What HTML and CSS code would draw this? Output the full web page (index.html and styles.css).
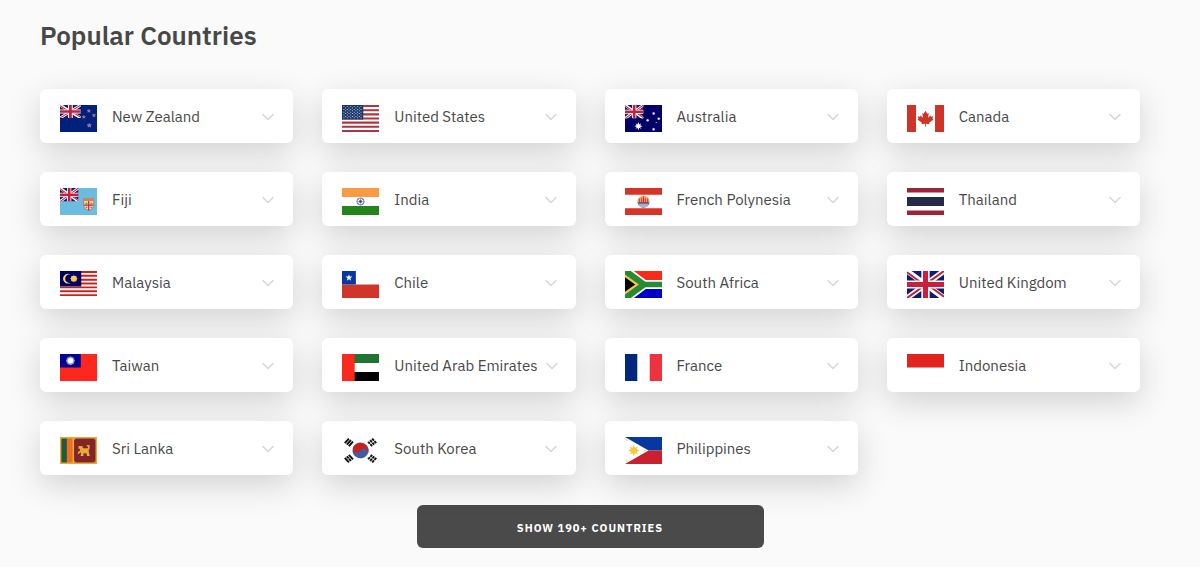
FILE: index.html
```html
<!DOCTYPE html>
<html lang="en">
<head>
<meta charset="utf-8">
<meta name="viewport" content="width=device-width, initial-scale=1">
<title>Popular Countries</title>
<link rel="stylesheet" href="styles.css">
</head>
<body>
<svg class="sprite" aria-hidden="true">
  <symbol id="chevron" viewBox="0 0 12 24"><path d="M1 9.500l5 5 5-5" fill="none" stroke="currentColor" stroke-width="1.600" stroke-linecap="round" stroke-linejoin="round"/></symbol>
  <symbol id="union" viewBox="0 0 40 30" preserveAspectRatio="none">
    <path fill="#0b1f6b" d="M0 0h40v30H0z"/>
    <path stroke="#fff" stroke-width="6" d="M0 0l40 30M40 0L0 30"/>
    <path stroke="#c8203c" stroke-width="2.200" d="M0 1.300L18 15M22 15l18 13.700M40 0L21 14M19 16L0 30"/>
    <path stroke="#fff" stroke-width="9" d="M20 0v30M0 15h40"/>
    <path stroke="#c8203c" stroke-width="5.500" d="M20 0v30M0 15h40"/>
  </symbol>
  <symbol id="star" viewBox="-10 -10 20 20"><path d="M0-10L2.300-3.200H9.500L3.700 1.200 5.900 8.100 0 3.900-5.900 8.100-3.700 1.200-9.500-3.200H-2.300z"/></symbol>
  <symbol id="sun" viewBox="-10 -10 20 20"><path d="M0-10L2-4.200 7.100-7.100 4.200-2 10 0 4.200 2 7.100 7.100 2 4.200 0 10-2 4.200-7.100 7.100-4.200 2-10 0-4.200-2-7.100-7.100-2-4.200z"/></symbol>
</svg>

<main class="page">
  <h1 class="title">Popular Countries</h1>
  <ul class="countries">
    <li><button class="country" type="button" aria-expanded="false">
      <svg class="flag" viewBox="0 0 40 30" preserveAspectRatio="none" aria-hidden="true"><path fill="#00207c" d="M0 0h40v30H0z"/><use href="#union" width="22.500" height="14.500"/><g fill="#dc4661" stroke="#b9bddd" stroke-width="2"><use href="#star" x="29.200" y="4.600" width="4" height="4"/><use href="#star" x="23.800" y="11.300" width="4" height="4"/><use href="#star" x="34.700" y="9.500" width="4" height="4"/><use href="#star" x="29.200" y="20.200" width="5" height="5"/></g></svg>
      <span class="name">New Zealand</span><svg class="chevron" aria-hidden="true"><use href="#chevron"/></svg></button></li>
    <li><button class="country" type="button" aria-expanded="false">
      <svg class="flag" viewBox="0 0 40 30" preserveAspectRatio="none" aria-hidden="true"><path fill="#fff" d="M0 0h40v30H0z"/><path stroke="#ad3643" stroke-width="2.300" d="M0 1.150h40M0 5.770h40M0 10.380h40M0 15h40M0 19.620h40M0 24.230h40M0 28.850h40"/><path fill="#1b3667" d="M0 0h23v16.150H0z"/><g stroke="#b9c6df" stroke-width="1.100" stroke-dasharray="1.100 2.600"><path d="M1.500 1.800h20.500M1.500 4.900h20.500M1.500 8h20.500M1.500 11.100h20.500M1.500 14.200h20.500"/><path d="M3.350 3.350h18M3.350 6.450h18M3.350 9.550h18M3.350 12.650h18"/></g></svg>
      <span class="name">United States</span><svg class="chevron" aria-hidden="true"><use href="#chevron"/></svg></button></li>
    <li><button class="country" type="button" aria-expanded="false">
      <svg class="flag" viewBox="0 0 40 30" preserveAspectRatio="none" aria-hidden="true"><path fill="#000066" d="M0 0h40v30H0z"/><use href="#union" width="20" height="15"/><g fill="#fff"><use href="#sun" x="10" y="19" width="9" height="9"/><use href="#sun" x="29" y="7.500" width="4" height="4"/><use href="#sun" x="22.500" y="15" width="4" height="4"/><use href="#sun" x="34.500" y="13.200" width="4" height="4"/><use href="#sun" x="29" y="25" width="4" height="4"/><use href="#star" x="32.700" y="18.500" width="2" height="2"/></g></svg>
      <span class="name">Australia</span><svg class="chevron" aria-hidden="true"><use href="#chevron"/></svg></button></li>
    <li><button class="country" type="button" aria-expanded="false">
      <svg class="flag" viewBox="0 0 40 30" preserveAspectRatio="none" aria-hidden="true"><path fill="#fff" d="M0 0h40v30H0z"/><path fill="#d03428" d="M0 0h9.700v30H0zM30.300 0H40v30h-9.700zM20 6.500l1.900 3.300 1.600-.8-.8 5.200 2.600-2.600.6 1.400 2.500-.4-.9 2.700 1.100.8-4.700 3.600.5 1.800-4-.6.100 3h-1l.1-3-4 .6.500-1.800-4.700-3.600 1.100-.8-.9-2.700 2.500.4.600-1.400 2.600 2.600-.8-5.200 1.600.8z"/></svg>
      <span class="name">Canada</span><svg class="chevron" aria-hidden="true"><use href="#chevron"/></svg></button></li>

    <li><button class="country" type="button" aria-expanded="false">
      <svg class="flag" viewBox="0 0 40 30" preserveAspectRatio="none" aria-hidden="true"><path fill="#6cbcdf" d="M0 0h40v30H0z"/><use href="#union" width="20" height="15"/><path fill="#f0d5b0" stroke="#97694f" stroke-width=".700" d="M25.500 12h11v7c0 3.500-3 5-5.500 6-2.500-1-5.500-2.500-5.500-6z"/><path fill="#d88348" d="M25.500 11.500h11v3h-11z"/><path stroke="#c62535" stroke-width="1.300" d="M31 14.500V25M26 19h10"/><path stroke="#718258" stroke-width="1.300" d="M27.500 17h2M33 17h2M27.800 21.500h1.700M33 21.500h1.700"/></svg>
      <span class="name">Fiji</span><svg class="chevron" aria-hidden="true"><use href="#chevron"/></svg></button></li>
    <li><button class="country" type="button" aria-expanded="false">
      <svg class="flag" viewBox="0 0 40 30" preserveAspectRatio="none" aria-hidden="true"><path fill="#fff" d="M0 0h40v30H0z"/><path fill="#fa9b43" d="M0 0h40v10H0z"/><path fill="#26841d" d="M0 20h40v10H0z"/><g fill="none" stroke="#5555a5"><circle cx="20" cy="15" r="3.900" stroke-width=".900"/><path stroke-width=".500" d="M20 11v8M16 15h8M17.200 12.200l5.600 5.600M22.800 12.200l-5.600 5.600"/></g><circle cx="20" cy="15" r="1.300" fill="#393989"/></svg>
      <span class="name">India</span><svg class="chevron" aria-hidden="true"><use href="#chevron"/></svg></button></li>
    <li><button class="country" type="button" aria-expanded="false">
      <svg class="flag" viewBox="0 0 40 30" preserveAspectRatio="none" aria-hidden="true"><path fill="#fff" d="M0 0h40v30H0z"/><path fill="#d63426" d="M0 0h40v7.500H0zM0 22.500h40V30H0z"/><circle cx="20" cy="15" r="6.500" fill="#efa467"/><path fill="#5d7fb9" d="M13.500 15.500h13a6.500 6.500 0 0 1-13 0z"/><path stroke="#fff" stroke-width=".700" d="M15 18.800h10M16 20.200h8"/><path fill="none" stroke="#b63e35" stroke-width="1.100" d="M15.500 12v4.500h9V12M18 11.500v5M20 9.500v7M22 11.500v5"/></svg>
      <span class="name">French Polynesia</span><svg class="chevron" aria-hidden="true"><use href="#chevron"/></svg></button></li>
    <li><button class="country" type="button" aria-expanded="false">
      <svg class="flag" viewBox="0 0 40 30" preserveAspectRatio="none" aria-hidden="true"><path fill="#9c2439" d="M0 0h40v30H0z"/><path fill="#fff" d="M0 5h40v20H0z"/><path fill="#282849" d="M0 10h40v10H0z"/></svg>
      <span class="name">Thailand</span><svg class="chevron" aria-hidden="true"><use href="#chevron"/></svg></button></li>

    <li><button class="country" type="button" aria-expanded="false">
      <svg class="flag" viewBox="0 0 40 30" preserveAspectRatio="none" aria-hidden="true"><path fill="#fff" d="M0 0h40v30H0z"/><path stroke="#c5241c" stroke-width="2.140" d="M0 1.070h40M0 5.360h40M0 9.640h40M0 13.930h40M0 18.210h40M0 22.500h40M0 26.790h40"/><path fill="#000063" d="M0 0h23v17.140H0z"/><path fill="#ffd45a" d="M11.500 3.700a5.500 5.500 0 1 0 0 9.600 4.900 4.900 0 1 1 0-9.600z"/><use href="#sun" x="10.500" y="4" width="9" height="9" fill="#ffc94d"/><circle cx="15" cy="8.500" r="3.200" fill="#ffc94d"/></svg>
      <span class="name">Malaysia</span><svg class="chevron" aria-hidden="true"><use href="#chevron"/></svg></button></li>
    <li><button class="country" type="button" aria-expanded="false">
      <svg class="flag" viewBox="0 0 40 30" preserveAspectRatio="none" aria-hidden="true"><path fill="#fff" d="M0 0h40v15H0z"/><path fill="#d13529" d="M0 15h40v15H0z"/><path fill="#0638a0" d="M0 0h15v15H0z"/><use href="#star" x="3.500" y="3.500" width="8" height="8" fill="#fff"/></svg>
      <span class="name">Chile</span><svg class="chevron" aria-hidden="true"><use href="#chevron"/></svg></button></li>
    <li><button class="country" type="button" aria-expanded="false">
      <svg class="flag" viewBox="0 0 40 30" preserveAspectRatio="none" aria-hidden="true"><path fill="#fff" d="M0 0h40v30H0z"/><path fill="#fb281c" d="M9.500 0H40v10H22.500z"/><path fill="#0000c8" d="M9.500 30H40V20H22.500z"/><path fill="#278b36" d="M0 0h6.300L22 12h18v6H22L6.300 30H0z"/><path fill="#f6c64a" d="M0 3.800L15 15 0 26.200z"/><path fill="#000" d="M0 7l11 8L0 23z"/></svg>
      <span class="name">South Africa</span><svg class="chevron" aria-hidden="true"><use href="#chevron"/></svg></button></li>
    <li><button class="country" type="button" aria-expanded="false">
      <svg class="flag" viewBox="0 0 40 30" preserveAspectRatio="none" aria-hidden="true"><use href="#union" width="40" height="30"/></svg>
      <span class="name">United Kingdom</span><svg class="chevron" aria-hidden="true"><use href="#chevron"/></svg></button></li>

    <li><button class="country" type="button" aria-expanded="false">
      <svg class="flag" viewBox="0 0 40 30" preserveAspectRatio="none" aria-hidden="true"><path fill="#fc281d" d="M0 0h40v30H0z"/><path fill="#000095" d="M0 0h22.500v15H0z"/><circle cx="11.300" cy="7.500" r="4.600" fill="#7f86d3"/><use href="#sun" x="6" y="2.200" width="10.600" height="10.600" fill="#9da2df"/><circle cx="11.300" cy="7.500" r="3" fill="#fff"/></svg>
      <span class="name">Taiwan</span><svg class="chevron" aria-hidden="true"><use href="#chevron"/></svg></button></li>
    <li><button class="country" type="button" aria-expanded="false">
      <svg class="flag" viewBox="0 0 40 30" preserveAspectRatio="none" aria-hidden="true"><path fill="#fff" d="M0 0h40v30H0z"/><path fill="#207331" d="M0 0h40v10H0z"/><path d="M0 20h40v10H0z"/><path fill="#fb281c" d="M0 0h13.700v30H0z"/></svg>
      <span class="name">United Arab Emirates</span><svg class="chevron" aria-hidden="true"><use href="#chevron"/></svg></button></li>
    <li><button class="country" type="button" aria-expanded="false">
      <svg class="flag" viewBox="0 0 40 30" preserveAspectRatio="none" aria-hidden="true"><path fill="#fff" d="M0 0h40v30H0z"/><path fill="#00267d" d="M0 0h13.300v30H0z"/><path fill="#ed3340" d="M26.700 0H40v30H26.700z"/></svg>
      <span class="name">France</span><svg class="chevron" aria-hidden="true"><use href="#chevron"/></svg></button></li>
    <li><button class="country" type="button" aria-expanded="false">
      <svg class="flag" viewBox="0 0 40 30" preserveAspectRatio="none" aria-hidden="true"><path fill="#fff" d="M0 0h40v30H0z"/><path fill="#e2231f" d="M0 0h40v15H0z"/></svg>
      <span class="name">Indonesia</span><svg class="chevron" aria-hidden="true"><use href="#chevron"/></svg></button></li>

    <li><button class="country" type="button" aria-expanded="false">
      <svg class="flag" viewBox="0 0 40 30" preserveAspectRatio="none" aria-hidden="true"><path fill="#e6ac35" d="M0 0h40v30H0z"/><path fill="#1e5a3e" d="M1.500 1.700h6v26.600h-6z"/><path fill="#f26d24" d="M7.500 1.700h6v26.600h-6z"/><path fill="#842429" d="M15.200 1.700h23.200v26.600H15.200z"/><path fill="#e6ac35" d="M15.200 1.700h2l-2 2zM38.400 1.700h-2l2 2zM15.200 28.300h2l-2-2zM38.400 28.300h-2l2-2zM20 10h4l1 2.500h5.500l-.3-2h-1.200V9h3v4l-1 1.500.3 3 1 3.500h-3l-.8-3h-3l-.3 3h-3l.8-3.500-1.500-.3-1 1.800h-1.500l1-3.300 1.800-.5-.5-2.200H20z"/></svg>
      <span class="name">Sri Lanka</span><svg class="chevron" aria-hidden="true"><use href="#chevron"/></svg></button></li>
    <li><button class="country" type="button" aria-expanded="false">
      <svg class="flag" viewBox="0 0 40 30" preserveAspectRatio="none" aria-hidden="true"><path fill="#fff" d="M0 0h40v30H0z"/><g transform="rotate(33 20 15)"><circle cx="20" cy="15" r="8.700" fill="#415b9f"/><path fill="#c7231d" d="M11.300 15a8.700 8.700 0 0 1 17.400 0 4.350 4.350 0 0 0-8.700 0 4.350 4.350 0 0 1-8.700 0z"/></g><g stroke="#111" stroke-width="2.100"><path d="M3 6.800l4.500-5M5.200 8.500l4.500-5M7.400 10.200l4.500-5"/><path d="M37 6.800l-4.500-5M34.800 8.500l-4.500-5M32.600 10.200l-4.500-5" stroke-dasharray="2.900 .800"/><path d="M3 23.200l4.500 5M5.200 21.500l4.500 5M7.400 19.800l4.500 5"/><path d="M37 23.200l-4.500 5M34.800 21.500l-4.500 5M32.600 19.800l-4.500 5" stroke-dasharray="2.900 .800"/></g><path stroke="#fff" stroke-width=".900" d="M6.700 24.600l1.500-1.200"/></svg>
      <span class="name">South Korea</span><svg class="chevron" aria-hidden="true"><use href="#chevron"/></svg></button></li>
    <li><button class="country" type="button" aria-expanded="false">
      <svg class="flag" viewBox="0 0 40 30" preserveAspectRatio="none" aria-hidden="true"><path fill="#0638a0" d="M0 0h40v15H0z"/><path fill="#ca202f" d="M0 15h40v15H0z"/><path fill="#fff" d="M0 0l25.500 15L0 30z"/><g fill="#f5c83e"><use href="#sun" x="3" y="8.500" width="13" height="13"/><circle cx="9.500" cy="15" r="3.400"/><use href="#star" x=".500" y="2" width="3" height="3"/><use href="#star" x=".500" y="25" width="3" height="3"/><use href="#star" x="20" y="13.500" width="3" height="3"/></g></svg>
      <span class="name">Philippines</span><svg class="chevron" aria-hidden="true"><use href="#chevron"/></svg></button></li>
  </ul>
  <button class="show-all" type="button">SHOW 190+ COUNTRIES</button>
</main>
</body>
</html>
```
FILE: styles.css
```css
* {
  box-sizing: border-box;
}

body {
  margin: 0;
  background: #fafafa;
  color: #484848;
  font-family: "IBM Plex Sans", Roboto, "Noto Sans", sans-serif;
}

.sprite {
  display: none;
}

.page {
  padding: 17px 60px 19px 40px;
}

.title {
  margin: 0 0 36px;
  font-size: 26px;
  line-height: 36px;
  font-weight: 600;
}

.countries {
  display: grid;
  grid-template-columns: repeat(auto-fill, minmax(240px, 1fr));
  gap: 29px;
  margin: 0 0 30px;
  padding: 0;
  list-style: none;
}

.country {
  display: flex;
  align-items: flex-start;
  width: 100%;
  padding: 16px 19px 11px 20px;
  border: 0;
  border-radius: 6px;
  background: #fff;
  box-shadow: 0 10px 32px rgba(0, 0, 0, 0.16);
  color: inherit;
  font: inherit;
  font-size: 15px;
  line-height: 24px;
  text-align: left;
  cursor: pointer;
}

.flag {
  flex: none;
  width: 37px;
  height: 27px;
  margin-right: 15px;
}

.name {
  flex: 1 0 auto;
  white-space: nowrap;
}

.chevron {
  flex: none;
  width: 12px;
  height: 24px;
  margin-left: 9px;
  color: #d8d8d8;
}

.show-all {
  display: block;
  width: 347px;
  max-width: 100%;
  margin: 0 auto;
  padding: 13px 20px 10px;
  border: 0;
  border-radius: 6px;
  background: #4a4a4a;
  color: #fff;
  font: inherit;
  font-size: 11px;
  line-height: 20px;
  font-weight: 700;
  letter-spacing: 1px;
  cursor: pointer;
}
```
